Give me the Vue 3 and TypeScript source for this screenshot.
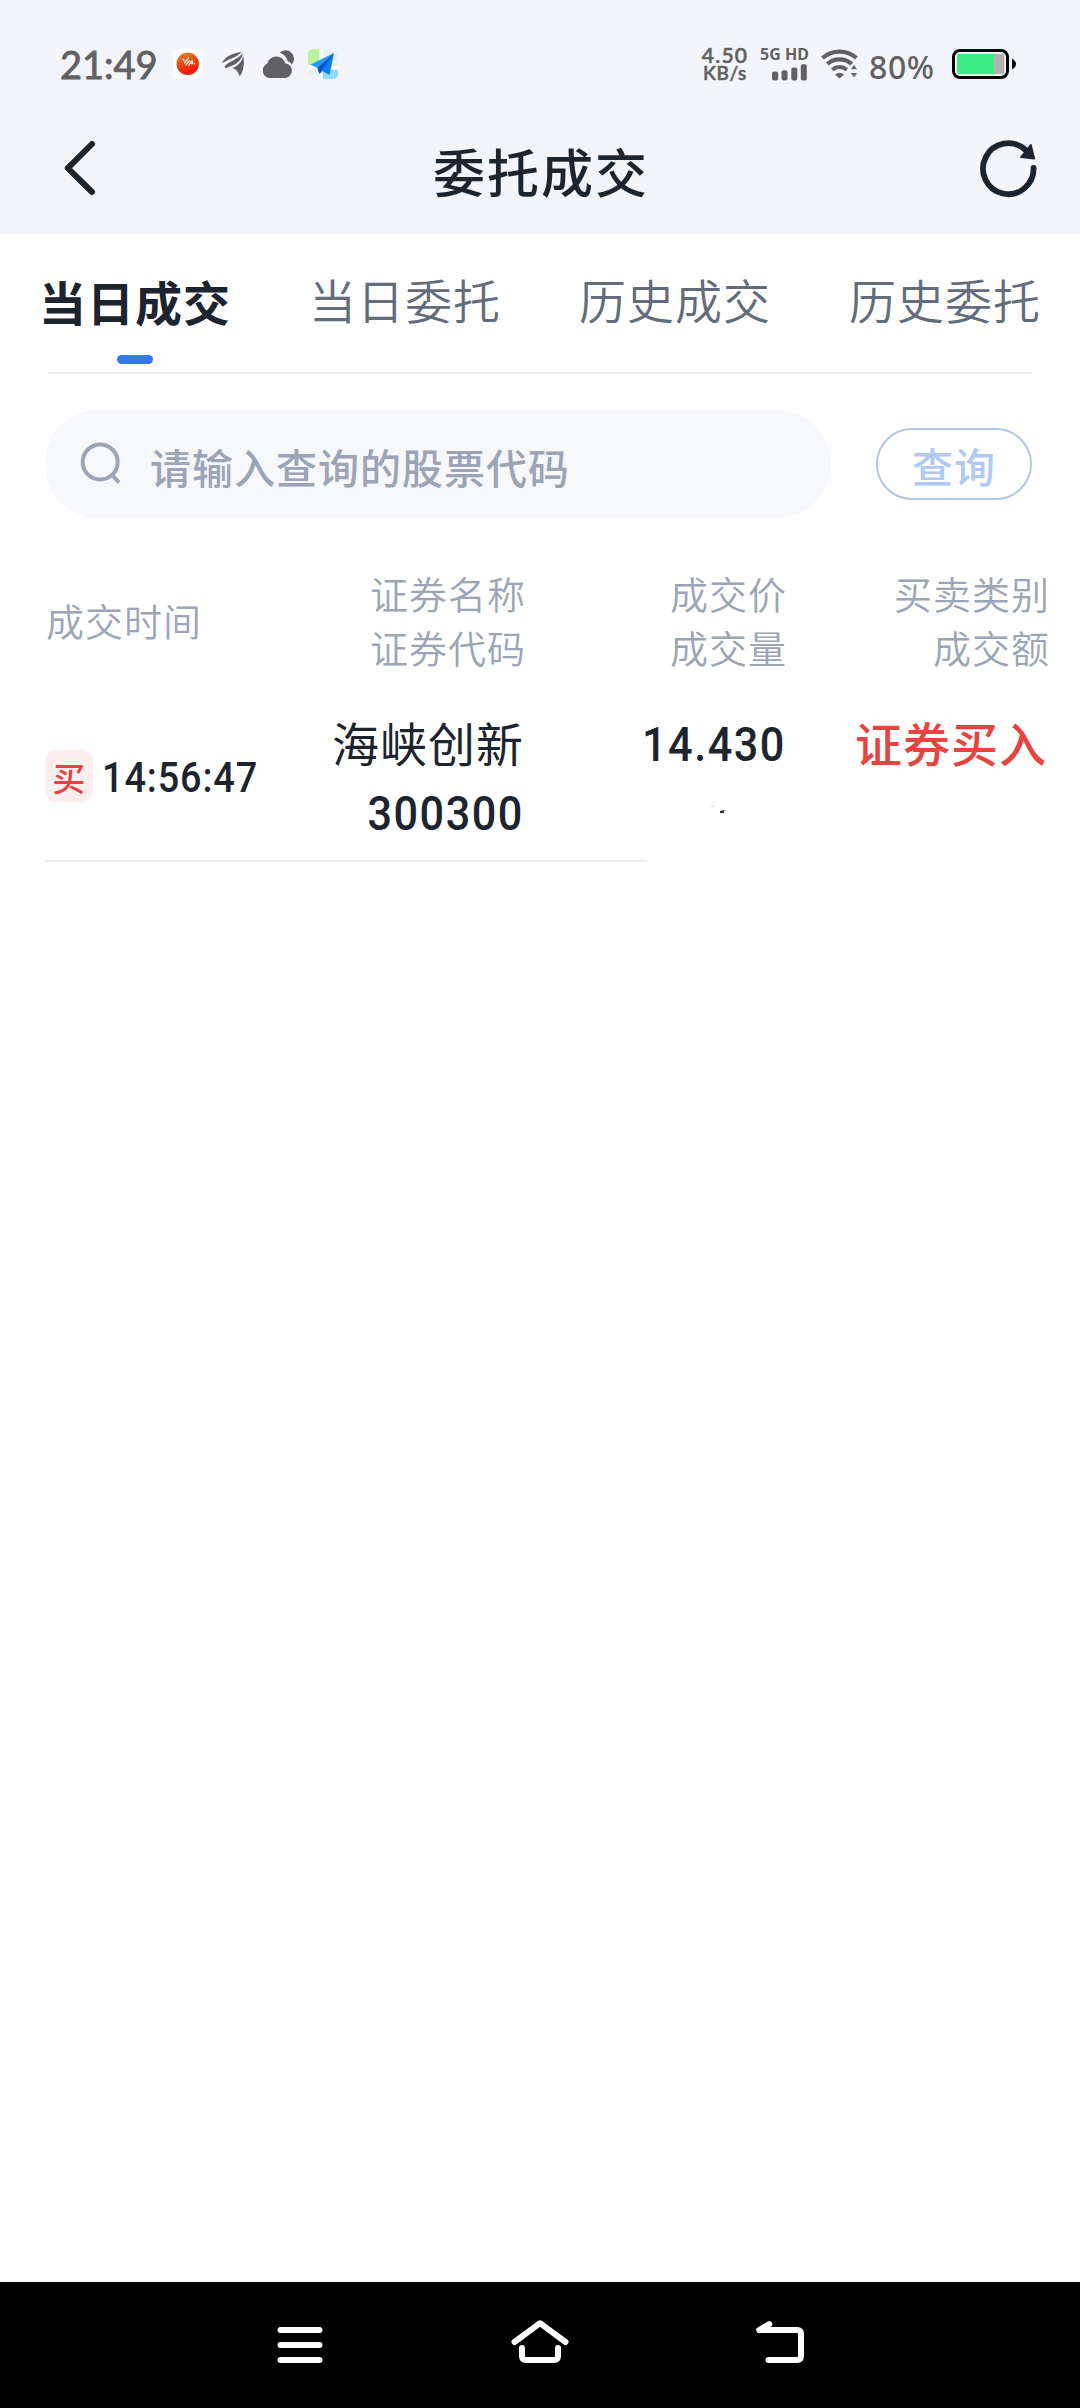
<script setup lang="ts">
interface Column {
  key: string
  lines: string[]
}

const tabs: string[] = ['当日成交', '当日委托', '历史成交', '历史委托']
const activeTab = 0

const columns: Column[] = [
  { key: 'time', lines: ['成交时间'] },
  { key: 'name', lines: ['证券名称', '证券代码'] },
  { key: 'price', lines: ['成交价', '成交量'] },
  { key: 'kind', lines: ['买卖类别', '成交额'] },
]

const deal = {
  side: '买',
  time: '14:56:47',
  name: '海峡创新',
  code: '300300',
  price: '14.430',
  kind: '证券买入',
}
</script>

<template>
  <div class="screen">
    <header class="top">
      <div class="status">
        <div class="status-left">
          <span class="clock">21:49</span>
          <svg class="app-icon" viewBox="0 0 30 30">
            <defs>
              <linearGradient id="ball" x1="0.2" y1="0" x2="0.6" y2="1">
                <stop offset="0" stop-color="#e38a2a" />
                <stop offset="0.55" stop-color="#f03a10" />
                <stop offset="1" stop-color="#ee1204" />
              </linearGradient>
            </defs>
            <rect width="30" height="30" rx="4" fill="#fff" />
            <circle cx="14.7" cy="14.8" r="11.2" fill="url(#ball)" />
            <path d="M10 10.200l1 1.200M11.600 14l4-5.200M13.200 15.800l3.200-4.200M15.800 16.400l3.400-5M18.800 14.800l1-1.600M21.300 14.600l.6.400" stroke="#fff" stroke-width="1.300" stroke-linecap="round" />
          </svg>
          <svg class="leaf-icon" viewBox="0 0 22 24" fill="#616163">
            <path d="M0 11.200C3 5 9 1.300 19.500 0 15 5.500 9 6 0 11.200z" />
            <path d="M2.600 14.500C7 8.500 15 8.500 20.500 1.200 20.200 9 13.500 12.500 8 14.400 6 15 4.500 15.600 3.200 16.200z" />
            <path d="M10.200 16.200C15.500 13.800 20 10 21.200 4.200 23 11 21.500 19 18 24 16.200 23 16.500 17 10.200 16.200z" />
          </svg>
          <svg class="cloud-icon" viewBox="0 0 30 28" fill="#616163">
            <path d="M7.500 28A7.500 7.500 0 0 1 4.300 13.600 9.300 9.300 0 0 1 22.300 13.200 7.500 7.500 0 0 1 22.800 28z" />
            <path d="M16.600 2.700A8.300 8.300 0 0 1 28.600 14.600C27.800 13 26.300 11.700 24.800 11.200 23.700 7 20.800 4 16.600 2.700z" />
          </svg>
          <svg class="map-icon" viewBox="0 0 30 30">
            <rect width="30" height="30" rx="5" fill="#e9f1f4" />
            <path d="M5 0h6v16H0V5a5 5 0 0 1 5-5z" fill="#bdf49a" />
            <path d="M15 21h15v4a5 5 0 0 1-5 5H15z" fill="#8fdcf8" />
            <path d="M11 0h4v30h-4zM0 17h30v3H0z" fill="#fff" />
            <path d="M26 4L2.500 15.500 9.500 19z" fill="#2398ff" />
            <path d="M26 4L9.500 19l2 6 3-3 7 4z" fill="#0a7cf5" />
            <path d="M26 4L9.500 19l2 6 2-4z" fill="#0551bd" />
          </svg>
        </div>
        <div class="status-right">
          <div class="speed"><span>4.50</span><span class="unit">KB/s</span></div>
          <div class="cell">
            <span>5G HD</span>
            <svg viewBox="0 0 36 17" fill="#616163">
              <rect x="0" y="7.500" width="6.200" height="9" rx="2" />
              <rect x="9.500" y="6.300" width="6" height="10.200" rx="2" />
              <rect x="19.300" y="3.500" width="6" height="13" rx="2" />
              <rect x="28.800" y="0.300" width="6" height="16.200" rx="2" />
            </svg>
          </div>
          <svg class="wifi" viewBox="0 0 37 30" fill="none" stroke="#616163">
            <path d="M1.500 9A26 26 0 0 1 35.500 9" stroke-width="4.200" />
            <path d="M6.300 15A18.500 18.500 0 0 1 30.700 15" stroke-width="4.200" />
            <path d="M11.200 20.700A11.500 11.500 0 0 1 25.800 20.700" stroke-width="4" />
            <path d="M14 25.500q4.500-3.500 9 0L18.500 29.500z" fill="#616163" stroke="none" />
            <path d="M33 15l4.200 5.800h-8.400zM33 29.300l4.200-5.800h-8.400z" fill="#616163" stroke="#f4f5fa" stroke-width="1.200" />
          </svg>
          <span class="percent">80%</span>
          <svg class="battery" viewBox="0 0 64 30">
            <rect x="1.500" y="1.500" width="54" height="27" rx="6.500" fill="#fff" stroke="#000" stroke-width="3" />
            <path d="M42 4.800h8.500a2 2 0 0 1 2 2v16.400a2 2 0 0 1-2 2H42z" fill="#b3b3b3" />
            <path d="M42 4.800H7a2 2 0 0 0-2 2v16.400a2 2 0 0 0 2 2h35z" fill="#3eea83" />
            <path d="M60 9.500q4 2.500 4 5.500t-4 5.500z" fill="#000" />
          </svg>
        </div>
      </div>
      <div class="title-bar">
        <svg class="back" viewBox="0 0 32 54">
          <path d="M28 3L3.800 27.200 28 51" fill="none" stroke="#1c2430" stroke-width="6" stroke-linecap="round" stroke-linejoin="round" />
        </svg>
        <h1>委托成交</h1>
        <svg class="refresh" viewBox="0 0 57 57">
          <path d="M53.600 28A25.300 25.500 0 1 1 45 9.500" fill="none" stroke="#1c2430" stroke-width="5.800" stroke-linecap="round" />
          <path d="M50.900 4.800L54.300 18.700 40.800 17.200z" fill="#1c2430" stroke="#1c2430" stroke-width="1.600" stroke-linejoin="round" />
        </svg>
      </div>
    </header>

    <nav class="tabs">
      <div v-for="(tab, i) in tabs" :key="tab" class="tab" :class="{ active: i === activeTab }">
        <span>{{ tab }}</span>
      </div>
    </nav>

    <div class="search-row">
      <div class="search">
        <svg viewBox="0 0 44 44" fill="none" stroke="#9ba5b5" stroke-width="4">
          <circle cx="20.200" cy="20" r="17.500" />
          <path d="M32 33l7 7.500" />
        </svg>
        <span>请输入查询的股票代码</span>
      </div>
      <button class="query" type="button">查询</button>
    </div>

    <div class="grid head">
      <div v-for="col in columns" :key="col.key" :class="col.key">
        <span v-for="line in col.lines" :key="line">{{ line }}</span>
      </div>
    </div>

    <div class="grid row">
      <div class="time"><i class="badge">{{ deal.side }}</i><b class="clocked">{{ deal.time }}</b></div>
      <div class="name"><span>{{ deal.name }}</span><span class="num">{{ deal.code }}</span></div>
      <div class="price">
        <span class="num">{{ deal.price }}</span>
        <svg class="speck" viewBox="0 0 14 8">
          <path d="M0 0.500h4" stroke="#dcdcdc" />
          <path d="M9 5l4.500-1-1 3-3.200.2z" fill="#222" />
        </svg>
      </div>
      <div class="kind"><span>{{ deal.kind }}</span></div>
    </div>
    <div class="row-line"></div>

    <footer class="nav">
      <svg class="menu" viewBox="0 0 46 36" stroke="#fff" stroke-width="6" stroke-linecap="round">
        <path d="M3.500 3h39M3.500 18h39M3.500 33h39" />
      </svg>
      <svg class="home" viewBox="0 0 58 43" fill="none" stroke="#fff" stroke-width="6" stroke-linecap="round" stroke-linejoin="round">
        <path d="M3.500 22L29 3.200l25.500 18.800" />
        <path d="M11 28v8q0 4 4 4h28q4 0 4-4V28" />
      </svg>
      <svg class="return" viewBox="0 0 48 42" fill="none" stroke="#fff" stroke-width="6" stroke-linecap="round" stroke-linejoin="round">
        <path d="M13.300 3.200L3.200 9H41q4 0 4 4V35q0 4-4 4H12.500" />
      </svg>
    </footer>
  </div>
</template>

<style>
body {
  margin: 0;
  background: #fff;
}
</style>

<style scoped>
.screen {
  width: 1080px;
  height: 2408px;
  display: flex;
  flex-direction: column;
  background: #fff;
  font-family: "Noto Sans CJK SC", sans-serif;
  color: #1c2430;
  overflow: hidden;
}
svg {
  display: block;
  flex: none;
  overflow: visible;
}
.top {
  height: 234px;
  background: #f4f5fa;
  flex: none;
}
.status {
  height: 128px;
  display: flex;
  justify-content: space-between;
  color: #616163;
}
.status-left,
.status-right {
  display: flex;
  align-items: center;
}
.status-left {
  padding-left: 60px;
}
.clock {
  width: 113px;
  font: 400 38px/1 Lato, sans-serif;
  -webkit-text-stroke: 0.9px #616163;
}
.app-icon { width: 30px; height: 30px; }
.leaf-icon { width: 22px; height: 24px; margin-left: 19px; }
.cloud-icon { width: 30px; height: 28px; margin-left: 19px; }
.map-icon { width: 30px; height: 30px; margin-left: 15px; }
.status-right {
  padding-right: 64px;
}
.speed {
  width: 50px;
  display: flex;
  flex-direction: column;
  align-items: center;
  font: 600 21px/18px Lato, sans-serif;
  letter-spacing: 1.2px;
  -webkit-text-stroke: 0.5px #616163;
}
.speed .unit {
  font-size: 19px;
  letter-spacing: 0.6px;
}
.cell {
  width: 50px;
  margin: -1px 0 0 10px;
  font: 700 16px/16px "Noto Sans", sans-serif;
  white-space: nowrap;
}
.cell svg {
  width: 36px;
  height: 17px;
  margin: 2px 0 0 12px;
}
.wifi { width: 37px; height: 30px; margin-left: 11px; }
.percent {
  width: 68px;
  margin-left: 11px;
  padding-top: 5px;
  font: 500 32px/1 "Noto Sans", sans-serif;
  letter-spacing: 0.6px;
}
.battery { width: 64px; height: 30px; margin-left: 15px; }

.title-bar {
  height: 86px;
  padding: 0 43px 0 64px;
  display: flex;
  justify-content: space-between;
  align-items: center;
}
.back { width: 32px; height: 54px; margin-top: -6px; }
.refresh { width: 57px; height: 57px; margin-top: -6px; }
h1 {
  margin: 0 0 0 6px;
  font-size: 52px;
  line-height: 86px;
  font-weight: 500;
  letter-spacing: 2px;
}

.tabs {
  flex: none;
  height: 140px;
  margin-bottom: 36px;
  display: flex;
  background: linear-gradient(#ececec, #ececec) 48px 100% / 984px 2px no-repeat;
}
.tab {
  width: 270px;
  display: flex;
  flex-direction: column;
  align-items: center;
  font-size: 47px;
  letter-spacing: 1px;
  line-height: 70px;
  color: #626c7b;
  padding-top: 30px;
  box-sizing: border-box;
  font-weight: 350;
}
.tab.active {
  color: #1c2430;
  font-weight: 700;
  padding-top: 32px;
}
.tab.active::after {
  content: "";
  width: 36px;
  height: 9px;
  margin-top: 19px;
  border-radius: 5px;
  background: #3478f0;
}

.search-row {
  flex: none;
  display: flex;
  align-items: center;
  padding: 0 48px 0 45px;
  justify-content: space-between;
}
.search {
  width: 786px;
  height: 108px;
  border-radius: 54px;
  background: #f7f8fb;
  display: flex;
  align-items: center;
  color: #9ba5b5;
  font-size: 41px;
  letter-spacing: 1px;
  font-weight: 500;
}
.search span {
  padding-top: 4px;
}
.search svg {
  width: 44px;
  height: 44px;
  margin: 0 26px 0 35px;
}
.query {
  width: 156px;
  height: 72px;
  box-sizing: border-box;
  padding: 3px 0 0;
  border: 2px solid #b0c6e6;
  border-radius: 36px;
  background: #fff;
  color: #b0c9f2;
  font: 500 41px/65px "Noto Sans CJK SC", sans-serif;
  letter-spacing: 1px;
}

.grid {
  flex: none;
  display: flex;
  padding-left: 45px;
}
.grid > div {
  display: flex;
  flex-direction: column;
  align-items: flex-end;
}
.grid .time { width: 230px; }
.grid .name { width: 250px; }
.grid .price { width: 262px; }
.grid .kind { width: 263px; }
.head {
  margin-top: 48px;
  height: 108px;
  font-size: 38px;
  letter-spacing: 1px;
  line-height: 54px;
  color: #9ba5b5;
  font-weight: 350;
}
.head .time {
  box-sizing: border-box;
  padding-left: 1px;
  align-items: flex-start;
  justify-content: center;
}
.head .name span {
  margin-right: -1px;
}
.row {
  margin-top: 33px;
  height: 153px;
  font-size: 47px;
  letter-spacing: 1px;
  line-height: 70px;
}
.row .time {
  flex-direction: row;
  align-items: flex-start;
  justify-content: flex-start;
}
.badge {
  width: 48px;
  height: 52px;
  margin-top: 43px;
  border-radius: 11px;
  background: #fdeeee;
  color: #e2453f;
  font: 500 33px/55px "Noto Sans CJK SC", sans-serif;
  letter-spacing: 0;
  text-align: center;
}
.clocked {
  margin: 44px 0 0 9px;
  font: 500 42px/54px Roboto, sans-serif;
  letter-spacing: 1px;
  transform: scaleX(0.9);
  transform-origin: 0 50%;
}
.num {
  font: 500 48px/70px Roboto, sans-serif;
  letter-spacing: 1.7px;
  transform: scaleX(0.9);
  transform-origin: 100% 50%;
}
.row .name span,
.price .num {
  margin-right: 1px;
}
.name .num {
  margin-top: 2px;
}
.price .num {
  margin-top: 3px;
}
.speck {
  width: 14px;
  height: 8px;
  margin: 26px 62px 0 0;
}
.row .kind {
  color: #e8433e;
  font-weight: 500;
}
.row .kind span {
  margin-right: 3px;
}
.row-line {
  flex: none;
  width: 602px;
  height: 2px;
  margin-left: 45px;
  background: #ececec;
}

.nav {
  flex: none;
  height: 126px;
  margin-top: auto;
  display: flex;
  align-items: flex-start;
  background: #000;
}
.menu { width: 46px; height: 36px; margin: 45px 0 0 277px; }
.home { width: 58px; height: 43px; margin: 38px 0 0 188px; }
.return { width: 48px; height: 42px; margin: 39px 0 0 187px; }
</style>
